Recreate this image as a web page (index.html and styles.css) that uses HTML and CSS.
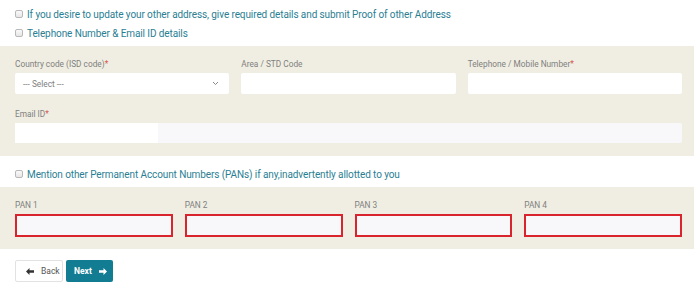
FILE: index.html
```html
<!DOCTYPE html>
<html>
<head>
<meta charset="utf-8">
<link rel="stylesheet" href="styles.css">
</head>
<body>
<div class="page">
  <label class="check first"><span class="box"></span>If you desire to update your other address, give required details and submit Proof of other Address</label>
  <label class="check"><span class="box"></span>Telephone Number &amp; Email ID details</label>

  <div class="panel panel-contact">
    <div class="grid3">
      <div class="field">
        <div class="lbl">Country code (ISD code)<span class="req">*</span></div>
        <div class="input select"><span class="ph">--- Select ---</span>
          <svg class="chev" width="7" height="5" viewBox="0 0 7 5"><path d="M1 1l2.5 2.5L6 1" fill="none" stroke="#888" stroke-width="1"/></svg>
        </div>
      </div>
      <div class="field">
        <div class="lbl">Area / STD Code</div>
        <div class="input"></div>
      </div>
      <div class="field">
        <div class="lbl">Telephone / Mobile Number<span class="req">*</span></div>
        <div class="input"></div>
      </div>
    </div>
    <div class="field email-field">
      <div class="lbl">Email ID<span class="req">*</span></div>
      <div class="input email"><span class="mask"></span></div>
    </div>
  </div>

  <label class="check third"><span class="box"></span>Mention other Permanent Account Numbers (PANs) if any,inadvertently allotted to you</label>

  <div class="panel panel-pan">
    <div class="grid4">
      <div class="field"><div class="lbl">PAN 1</div><div class="input pan"></div></div>
      <div class="field"><div class="lbl">PAN 2</div><div class="input pan"></div></div>
      <div class="field"><div class="lbl">PAN 3</div><div class="input pan"></div></div>
      <div class="field"><div class="lbl">PAN 4</div><div class="input pan"></div></div>
    </div>
  </div>

  <div class="buttons">
    <button class="btn back"><svg width="8" height="7" viewBox="0 0 8 7"><path d="M0 3.5L3.5 0v2.3H8v2.4H3.5V7z" fill="#333"/></svg>Back</button>
    <button class="btn next">Next<svg width="8" height="7" viewBox="0 0 8 7"><path d="M8 3.5L4.5 0v2.3H0v2.4h4.5V7z" fill="#fff"/></svg></button>
  </div>
</div>
</body>
</html>
```
FILE: styles.css
```css
* { box-sizing: border-box; }
html, body { margin: 0; padding: 0; background: #fff; }
body { font-family: Roboto, "Open Sans", Arial, sans-serif; }
.page { width: 696px; height: 296px; overflow: hidden; }

.check {
  display: flex;
  align-items: center;
  height: 16px;
  padding-left: 15px;
  font-size: 10px;
  letter-spacing: -0.1px;
  color: #2a8093;
}
.check.first { margin-top: 6px; }
.check + .check { margin-top: 3px; }
.check.third { margin-top: 10px; }
.box {
  width: 8px;
  height: 8px;
  border: 1px solid #b8b8b8;
  border-radius: 2px;
  background: linear-gradient(#fafafa, #e6e6e6);
  margin-right: 4px;
  flex: none;
}

.panel {
  width: 694px;
  background: #f0eee2;
  padding: 0 12px 0 15px;
}
.panel-contact { margin-top: 5px; padding-top: 12px; padding-bottom: 13px; }
.panel-pan { margin-top: 5px; padding-top: 12px; padding-bottom: 12px; }

.grid3 { display: grid; grid-template-columns: repeat(3, 1fr); column-gap: 12px; }
.grid4 { display: grid; grid-template-columns: repeat(4, 1fr); column-gap: 12px; }

.lbl {
  font-size: 8.3px;
  line-height: 12px;
  color: #808080;
  margin-bottom: 3px;
}
.req { color: #d9534f; }

.input {
  height: 21px;
  background: #fff;
  border-radius: 2px;
}
.select {
  display: flex;
  align-items: center;
  justify-content: space-between;
  padding: 0 8px 0 8px;
}
.ph { font-size: 8.3px; color: #808080; }
.chev { margin-right: 2px; }

.email-field { margin-top: 14px; }
.email { background: #f8f8fa; height: 20px; }
.mask { display: block; width: 143px; height: 100%; background: #fff; }

.pan {
  height: 23px;
  background: #f8f8fa;
  border: 2px solid #d9232d;
  border-radius: 0;
}

.buttons { display: flex; gap: 3px; padding-left: 15px; margin-top: 11px; }
.btn {
  height: 22px;
  font-family: Roboto, Arial, sans-serif;
  font-size: 8.5px;
  border-radius: 2px;
  display: flex;
  align-items: center;
  gap: 7px;
  cursor: pointer;
}
.back {
  width: 48px;
  background: #fff;
  border: 1px solid #e2e2e2;
  color: #555;
  padding: 0 0 0 10px;
}
.next {
  width: 47px;
  background: #127d92;
  border: 0;
  color: #fff;
  font-weight: bold;
  padding: 0 0 0 8px;
}
```
